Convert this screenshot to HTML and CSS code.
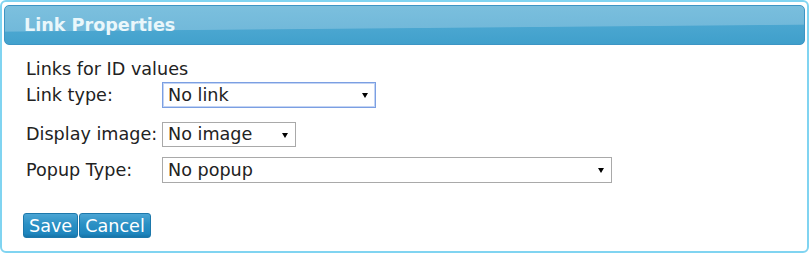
FILE: index.html
```html
<!DOCTYPE html>
<html>
<head>
  <title>Link Properties</title>
  <link rel="stylesheet" href="styles.css">
</head>
<body>
  <div class="panel">
    <div class="panel-header">Link Properties</div>

    <div class="panel-body">
      <div class="intro">Links for ID values</div>

      <div class="row">
        <label for="linkType">Link type:</label>
        <span class="select-wrap">
          <select id="linkType" class="select select-link focused">
            <option>No link</option>
          </select>
        </span>
      </div>

      <div class="row row-image">
        <label for="displayImage">Display image:</label>
        <span class="select-wrap">
          <select id="displayImage" class="select select-image">
            <option>No image</option>
          </select>
        </span>
      </div>

      <div class="row row-popup">
        <label for="popupType">Popup Type:</label>
        <span class="select-wrap">
          <select id="popupType" class="select select-popup">
            <option>No popup</option>
          </select>
        </span>
      </div>

      <div class="button-group">
        <button class="btn">Save</button>
        <button class="btn">Cancel</button>
      </div>
    </div>
  </div>
</body>
</html>
```

FILE: styles.css
```css
:root {
  --panel-border: #80d4f1;
  --header-border: #3d95c4;
  --text-color: #222222;
  --select-border: #a9a9a9;
  --focus-border: #7b9fe2;
}

* {
  box-sizing: border-box;
}

body {
  margin: 0;
  background-color: #ffffff;
  font-family: 'DejaVu Sans', Verdana, sans-serif;
  font-size: 17.6px;
  color: var(--text-color);
}

.panel {
  width: 809px;
  height: 253px;
  border: 2px solid var(--panel-border);
  border-radius: 6px;
  padding: 3px 2px;
  background-color: #ffffff;
}

.panel-header {
  height: 40px;
  line-height: 38px;
  padding-left: 19px;
  border: 1px solid var(--header-border);
  border-radius: 5px;
  background: linear-gradient(179.5deg, #7cc0de 0%, #72b9da 56%, #4aa6d0 58%, #3f9fcb 100%);
  color: #eaf7fb;
  font-weight: bold;
  font-size: 17.6px;
}

.panel-body {
  padding: 13px 0 0 22px;
}

.intro {
  line-height: 22px;
}

.row {
  display: flex;
  align-items: center;
  height: 26px;
  margin-top: 2px;
}

.row-image {
  margin-top: 13px;
}

.row-popup {
  margin-top: 10px;
}

.row label {
  width: 136px;
  line-height: 22px;
}

.select-wrap {
  position: relative;
  display: inline-block;
}

.select-wrap::after {
  content: "";
  position: absolute;
  right: 8px;
  top: 11px;
  border-left: 3px solid transparent;
  border-right: 3px solid transparent;
  border-top: 5px solid #000000;
  pointer-events: none;
}

.select {
  appearance: none;
  -webkit-appearance: none;
  display: block;
  height: 26px;
  padding: 0 20px 0 5px;
  border: 1px solid var(--select-border);
  border-radius: 0;
  background-color: #ffffff;
  font-family: inherit;
  font-size: 17.6px;
  color: var(--text-color);
}

.select.focused {
  border-color: var(--focus-border);
  box-shadow: inset 0 0 0 1px #c3d4f4;
}

.select-link {
  width: 214px;
}

.select-image {
  width: 134px;
  height: 25px;
}

.select-popup {
  width: 450px;
}

.button-group {
  display: flex;
  gap: 1px;
  margin: 30px 0 0 -3px;
}

.btn {
  height: 25px;
  padding: 0 5px;
  border: 1px solid #1d78ab;
  border-radius: 3px;
  background: linear-gradient(to bottom, #4ba5d4 0%, #2b90c4 45%, #1f86be 85%, #1674a8 100%);
  color: #ffffff;
  font-family: inherit;
  font-size: 17.6px;
  line-height: 22px;
  cursor: pointer;
}
```
